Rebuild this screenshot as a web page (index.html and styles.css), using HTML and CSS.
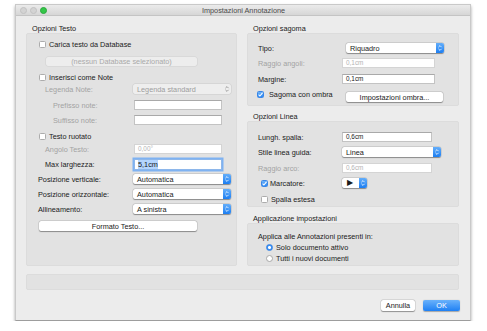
FILE: index.html
```html
<!DOCTYPE html>
<html>
  <head>
    <title>Impostazioni Annotazione</title>
    <link rel="stylesheet" href="styles.css">
  </head>
  <body>
    <div class="window">
      <div class="titlebar">
        <div class="lights">
          <span class="light"></span>
          <span class="light"></span>
          <span class="light green"></span>
        </div>
        <div class="title">Impostazioni Annotazione</div>
      </div>

      <div class="content">
        <div class="columns">
          <!-- colonna sinistra -->
          <div class="col">
            <div class="group-label">Opzioni Testo</div>
            <div class="group testo">
              <div class="row chk-row mt-6">
                <span class="check"></span>
                <span>Carica testo da Database</span>
              </div>
              <div class="row mt-7">
                <div class="btn disabled db-btn">(nessun Database selezionato)</div>
              </div>
              <div class="row chk-row mt-7">
                <span class="check"></span>
                <span>Inserisci come Note</span>
              </div>
              <div class="row mt-2">
                <span class="lbl dis in-1">Legenda Note:</span>
                <div class="popup disabled w-popup">
                  <span class="val">Legenda standard</span>
                  <span class="stepper">
                    <svg width="8" height="10" viewBox="0 0 8 10"><path d="M2.4 4.2 L4 2.6 L5.6 4.2 M2.4 5.8 L4 7.4 L5.6 5.8" stroke="#8a8a8a" stroke-width="0.8" fill="none"/></svg>
                  </span>
                </div>
              </div>
              <div class="row mt-6">
                <span class="lbl dis in-2">Prefisso note:</span>
                <div class="field w-field"></div>
              </div>
              <div class="row mt-5">
                <span class="lbl dis in-2">Suffisso note:</span>
                <div class="field w-field"></div>
              </div>
              <div class="row chk-row mt-7">
                <span class="check"></span>
                <span>Testo ruotato</span>
              </div>
              <div class="row mt-3">
                <span class="lbl dis in-1">Angolo Testo:</span>
                <div class="field disabled w-field">0,00°</div>
              </div>
              <div class="row mt-5">
                <span class="lbl in-1">Max larghezza:</span>
                <div class="field focus w-field"><span class="sel">5,1cm</span></div>
              </div>
              <div class="row mt-5">
                <span class="lbl">Posizione verticale:</span>
                <div class="popup w-popup">
                  <span class="val">Automatica</span>
                  <span class="stepper blue">
                    <svg width="8" height="10" viewBox="0 0 8 10"><path d="M2.4 4.2 L4 2.6 L5.6 4.2 M2.4 5.8 L4 7.4 L5.6 5.8" stroke="#fff" stroke-width="0.8" fill="none"/></svg>
                  </span>
                </div>
              </div>
              <div class="row mt-5">
                <span class="lbl">Posizione orizzontale:</span>
                <div class="popup w-popup">
                  <span class="val">Automatica</span>
                  <span class="stepper blue">
                    <svg width="8" height="10" viewBox="0 0 8 10"><path d="M2.4 4.2 L4 2.6 L5.6 4.2 M2.4 5.8 L4 7.4 L5.6 5.8" stroke="#fff" stroke-width="0.8" fill="none"/></svg>
                  </span>
                </div>
              </div>
              <div class="row mt-5">
                <span class="lbl">Allineamento:</span>
                <div class="popup w-popup">
                  <span class="val">A sinistra</span>
                  <span class="stepper blue">
                    <svg width="8" height="10" viewBox="0 0 8 10"><path d="M2.4 4.2 L4 2.6 L5.6 4.2 M2.4 5.8 L4 7.4 L5.6 5.8" stroke="#fff" stroke-width="0.8" fill="none"/></svg>
                  </span>
                </div>
              </div>
              <div class="row mt-7">
                <div class="btn formato-btn">Formato Testo...</div>
              </div>
            </div>
          </div>

          <!-- colonna destra -->
          <div class="col">
            <div class="group-label">Opzioni sagoma</div>
            <div class="group sagoma">
              <div class="row mt-9">
                <span class="lbl">Tipo:</span>
                <div class="popup tipo-popup">
                  <span class="val">Riquadro</span>
                  <span class="stepper blue">
                    <svg width="8" height="10" viewBox="0 0 8 10"><path d="M2.4 4.2 L4 2.6 L5.6 4.2 M2.4 5.8 L4 7.4 L5.6 5.8" stroke="#fff" stroke-width="0.8" fill="none"/></svg>
                  </span>
                </div>
              </div>
              <div class="row mt-5">
                <span class="lbl dis">Raggio angoli:</span>
                <div class="field disabled w-field-r">0,1cm</div>
              </div>
              <div class="row mt-6">
                <span class="lbl">Margine:</span>
                <div class="field w-field-r">0,1cm</div>
              </div>
              <div class="row ombra-row mt-6">
                <span class="lbl chk-lbl">
                  <span class="check on">
                    <svg width="7" height="7" viewBox="0 0 7 7"><path d="M1.6 3.6 L2.9 5 L5.5 1.8" stroke="#fff" stroke-width="1.1" fill="none"/></svg>
                  </span>
                  <span>Sagoma con ombra</span>
                </span>
                <div class="btn ombra-btn">Impostazioni ombra...</div>
              </div>
            </div>

            <div class="group-label mt-7">Opzioni Linea</div>
            <div class="group linea">
              <div class="row mt-10">
                <span class="lbl">Lungh. spalla:</span>
                <div class="field w-field-l">0,6cm</div>
              </div>
              <div class="row mt-5">
                <span class="lbl">Stile linea guida:</span>
                <div class="popup stile-popup">
                  <span class="val">Linea</span>
                  <span class="stepper blue">
                    <svg width="8" height="10" viewBox="0 0 8 10"><path d="M2.4 4.2 L4 2.6 L5.6 4.2 M2.4 5.8 L4 7.4 L5.6 5.8" stroke="#fff" stroke-width="0.8" fill="none"/></svg>
                  </span>
                </div>
              </div>
              <div class="row mt-6">
                <span class="lbl dis">Raggio arco:</span>
                <div class="field disabled w-field-l">0,6cm</div>
              </div>
              <div class="row mt-5">
                <span class="lbl chk-lbl in-m">
                  <span class="check on">
                    <svg width="7" height="7" viewBox="0 0 7 7"><path d="M1.6 3.6 L2.9 5 L5.5 1.8" stroke="#fff" stroke-width="1.1" fill="none"/></svg>
                  </span>
                  <span>Marcatore:</span>
                </span>
                <div class="popup marker-popup">
                  <span class="val">▶</span>
                  <span class="stepper blue">
                    <svg width="8" height="10" viewBox="0 0 8 10"><path d="M2.4 4.2 L4 2.6 L5.6 4.2 M2.4 5.8 L4 7.4 L5.6 5.8" stroke="#fff" stroke-width="0.8" fill="none"/></svg>
                  </span>
                </div>
              </div>
              <div class="row chk-row in-m mt-7">
                <span class="check"></span>
                <span>Spalla estesa</span>
              </div>
            </div>

            <div class="group-label mt-8">Applicazione impostazioni</div>
            <div class="group applica">
              <div class="row text-row mt-8">Applica alle Annotazioni presenti in:</div>
              <div class="row radio-row mt-3">
                <span class="radio on"></span>
                <span>Solo documento attivo</span>
              </div>
              <div class="row radio-row mt-2">
                <span class="radio"></span>
                <span>Tutti i nuovi documenti</span>
              </div>
            </div>
          </div>
        </div>

        <div class="statusbar"></div>

        <div class="actions">
          <div class="btn annulla-btn">Annulla</div>
          <div class="btn ok-btn">OK</div>
        </div>
      </div>
    </div>
  </body>
</html>
```

FILE: styles.css
```css
* {
  margin: 0;
  padding: 0;
  box-sizing: border-box;
}

body {
  background-color: #ffffff;
  font-family: "Liberation Sans", Arial, sans-serif;
  font-size: 7.3px;
  color: #1a1a1a;
}

.window {
  width: 456px;
  height: 317px;
  margin: 4px 0 0 15px;
  background-color: #ececec;
  border: 1px solid #c9c9c9;
  border-bottom-color: #9d9d9d;
  box-shadow: 0 2px 3px rgba(0, 0, 0, 0.35);
}

.titlebar {
  height: 11px;
  display: flex;
  align-items: center;
  background: linear-gradient(#ebebeb, #d6d6d6);
  border-bottom: 1px solid #c4c4c4;
  padding-left: 4px;
}

.lights {
  display: flex;
  gap: 3px;
}
.light {
  width: 7px;
  height: 7px;
  border-radius: 50%;
  background-color: #d3d3d3;
  border: 0.5px solid #c2c2c2;
}
.light.green {
  background-color: #33c748;
  border-color: #2aa83c;
}

.title {
  flex: 1;
  text-align: center;
  color: #4a4a4a;
  padding-right: 30px;
}

.content {
  padding: 9px 11px 0 10px;
}

.columns {
  display: flex;
  gap: 10px;
}
.col {
  display: flex;
  flex-direction: column;
}
.col:first-child {
  width: 211px;
}
.col:last-child {
  width: 212px;
}

.group-label {
  height: 8px;
  line-height: 8px;
  padding-left: 6px;
}

.group {
  background-color: #e2e2e2;
  border: 1px solid #dcdcdc;
  border-radius: 2px;
  display: flex;
  flex-direction: column;
}
.testo {
  height: 233px;
}
.sagoma {
  height: 73px;
}
.linea {
  height: 86px;
}
.applica {
  height: 43px;
}

.mt-2 { margin-top: 2px; }
.mt-3 { margin-top: 3px; }
.mt-5 { margin-top: 5px; }
.mt-6 { margin-top: 6px; }
.mt-7 { margin-top: 7px; }
.mt-8 { margin-top: 8px; }
.mt-9 { margin-top: 9px; }
.mt-10 { margin-top: 10px; }

.row {
  display: flex;
  align-items: center;
  height: 10px;
  white-space: nowrap;
}

.chk-row {
  height: 9px;
  padding-left: 12px;
  gap: 3px;
}
.chk-row.in-m {
  padding-left: 13px;
}

.lbl {
  flex: none;
  padding-left: 11px;
}
.testo .lbl {
  width: 106px;
}
.sagoma .lbl,
.linea .lbl {
  width: 94px;
  padding-left: 10px;
}
.testo .lbl.in-1 {
  padding-left: 18px;
}
.testo .lbl.in-2 {
  padding-left: 26px;
}
.dis {
  color: #a3a3a3;
}

.chk-lbl {
  display: flex;
  align-items: center;
  gap: 5px;
}
.sagoma .chk-lbl {
  padding-left: 9px;
}
.linea .chk-lbl.in-m {
  padding-left: 13px;
  gap: 2px;
}

.check {
  width: 7px;
  height: 7px;
  flex: none;
  background-color: #ffffff;
  border: 1px solid #acacac;
  border-radius: 1.5px;
  display: flex;
}
.check.on {
  background: linear-gradient(#6cb3fa, #2a86f3);
  border-color: #3a86e6;
}
.check svg {
  margin: -1px;
}

.radio {
  width: 7px;
  height: 7px;
  flex: none;
  border-radius: 50%;
  background-color: #ffffff;
  border: 1px solid #a8a8a8;
}
.radio.on {
  background: radial-gradient(circle, #ffffff 0 1.3px, #3a8ff3 1.6px);
  border-color: #3583e6;
}
.radio-row {
  height: 9px;
  padding-left: 18px;
  gap: 3px;
}
.text-row {
  height: 8px;
  padding-left: 10px;
}

.field {
  height: 10px;
  background-color: #ffffff;
  border: 1px solid #c3c3c3;
  border-top-color: #a9a9a9;
  padding-left: 3px;
  line-height: 8px;
  font-size: 6.4px;
}
.field.disabled {
  color: #b4b4b4;
  border-color: #d4d4d4;
}
.field.focus {
  height: 11px;
  box-shadow: 0 0 0 1.5px #7eb2f2;
  border-color: #8eb7ea;
  font-size: 7.3px;
  line-height: 9px;
}
.sel {
  background-color: #b4d5fe;
}
.w-field {
  width: 88px;
  margin-left: 1px;
}
.w-field-r {
  width: 93px;
}
.w-field-l {
  width: 90px;
}

.popup {
  height: 10px;
  display: flex;
  align-items: center;
  background-color: #ffffff;
  border-radius: 2px;
  box-shadow: 0 0.5px 1px rgba(0, 0, 0, 0.35), 0 0 0 0.5px rgba(0, 0, 0, 0.12);
}
.popup .val {
  flex: 1;
  padding-left: 4px;
}
.popup.disabled {
  background-color: #eeeeee;
  color: #9d9d9d;
  box-shadow: 0 0 0 0.5px rgba(0, 0, 0, 0.1);
}
.stepper {
  width: 8px;
  height: 10px;
  display: flex;
  border-radius: 0 2px 2px 0;
}
.stepper.blue {
  background: linear-gradient(#64aefa, #1c7ef2);
}
.w-popup {
  width: 98px;
}
.tipo-popup {
  width: 98px;
  margin-left: 4px;
}
.stile-popup {
  width: 99px;
}
.marker-popup {
  width: 25px;
}
.marker-popup .val {
  padding-left: 5px;
  font-size: 7.5px;
  line-height: 10px;
}

.btn {
  height: 10px;
  display: flex;
  align-items: center;
  justify-content: center;
  background-color: #ffffff;
  border-radius: 2px;
  box-shadow: 0 0.5px 1px rgba(0, 0, 0, 0.35), 0 0 0 0.5px rgba(0, 0, 0, 0.12);
}
.btn.disabled {
  background-color: #ededed;
  color: #a9a9a9;
  box-shadow: 0 0 0 0.5px rgba(0, 0, 0, 0.08);
}
.db-btn {
  width: 151px;
  height: 9px;
  margin-left: 19px;
}
.formato-btn {
  width: 158px;
  margin-left: 12px;
}
.ombra-row {
  height: 12px;
  align-items: flex-start;
}
.ombra-btn {
  width: 97px;
  margin-top: 2px;
  margin-left: 4px;
}

.statusbar {
  margin-top: 8px;
  height: 16px;
  background-color: #e2e2e2;
  border: 1px solid #dcdcdc;
  border-radius: 2px;
}

.actions {
  margin-top: 10px;
  margin-right: -1px;
  display: flex;
  justify-content: flex-end;
  gap: 8px;
}
.annulla-btn {
  width: 34px;
  height: 11px;
}
.ok-btn {
  width: 37px;
  height: 11px;
  color: #ffffff;
  background: linear-gradient(#6ab2fb, #1f80f4);
  box-shadow: 0 0.5px 1px rgba(0, 0, 0, 0.3);
}
```
